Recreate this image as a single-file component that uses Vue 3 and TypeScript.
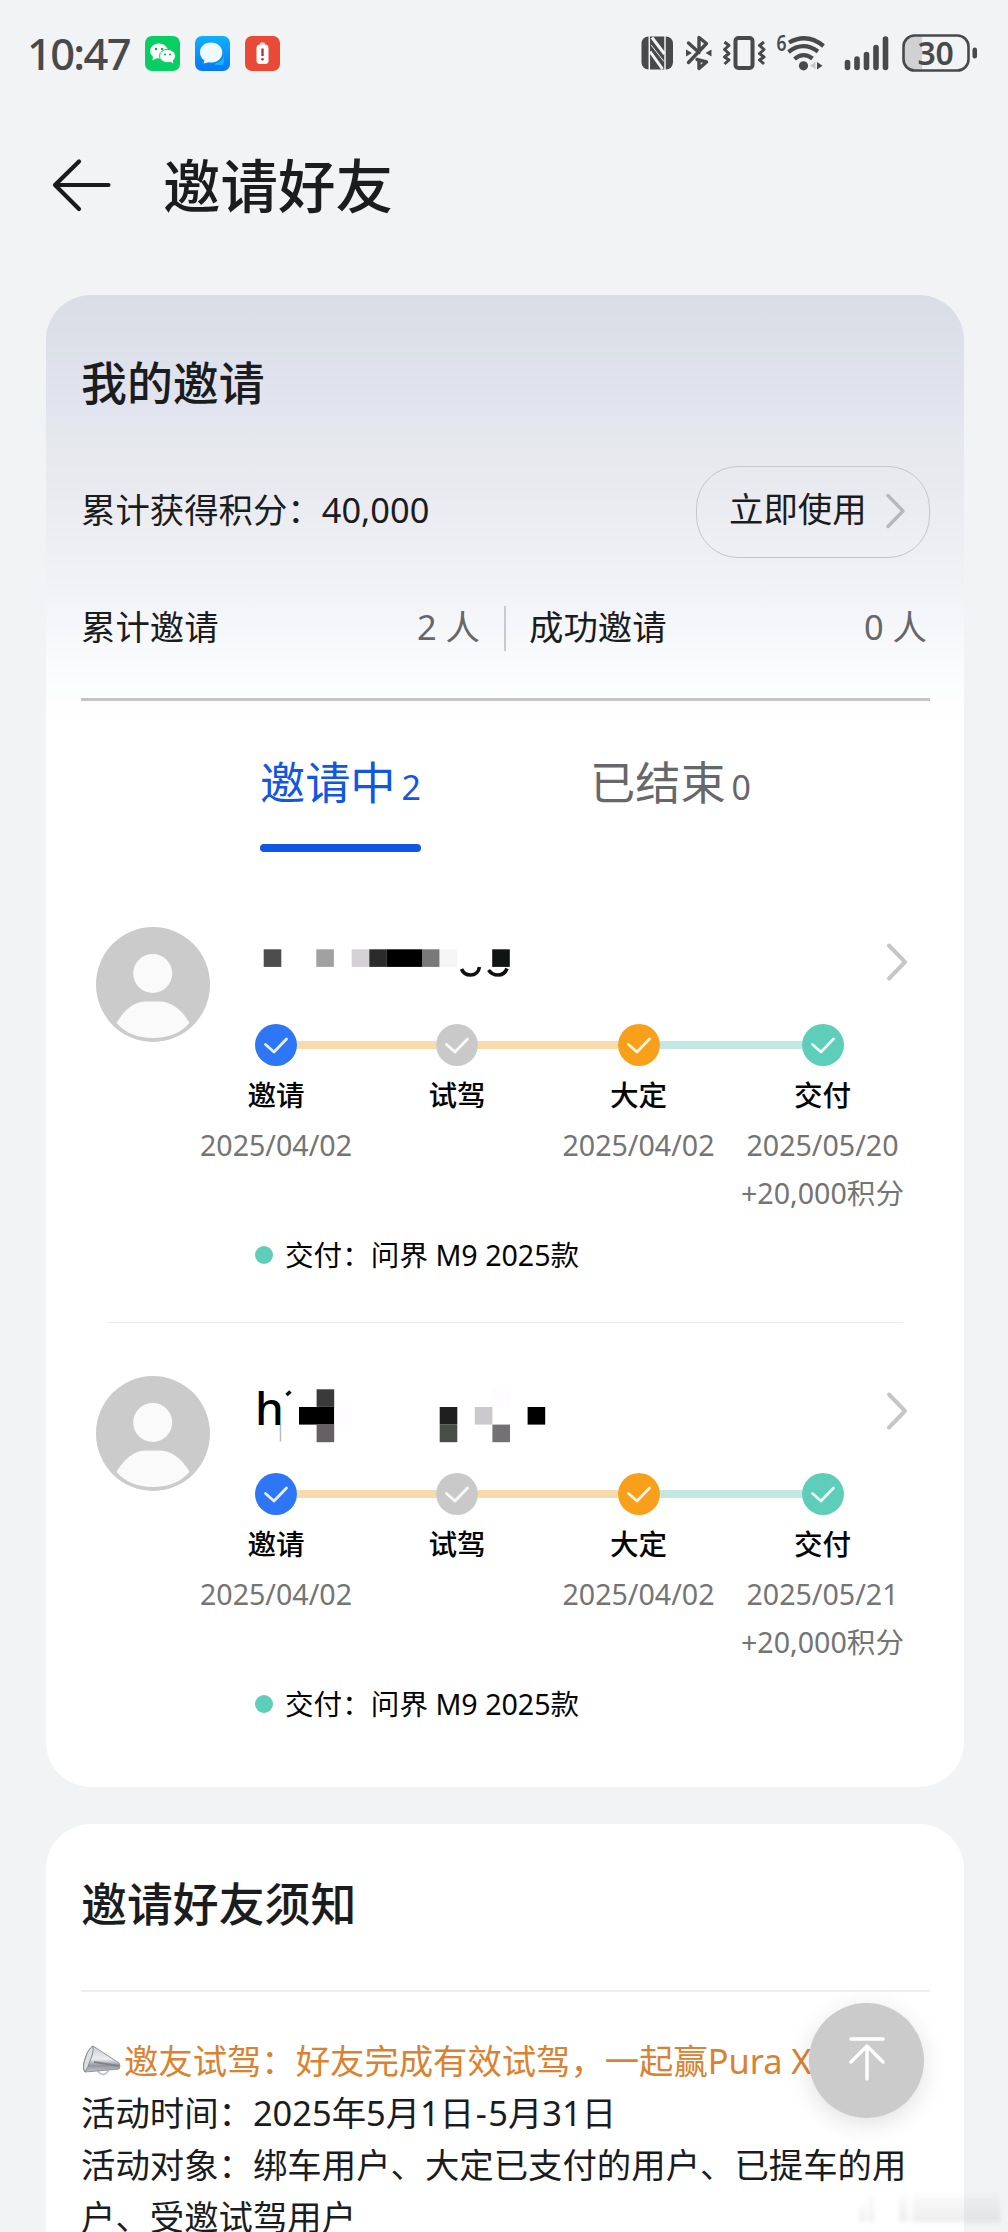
<script setup lang="ts">
interface Step {
  label: string
  tone: 'blue' | 'gray' | 'orange' | 'teal'
  date?: string
  points?: string
  link?: 'sand' | 'mint'
  linkWidth?: number
}

interface Block {
  x: number
  y: number
  w?: number
  c: string
}

interface Invite {
  prefix: string
  strokes: string
  hairline: string
  blocks: Block[]
  steps: Step[]
  model: string
}

const makeSteps = (delivered: string): Step[] => [
  { label: '邀请', tone: 'blue', date: '2025/04/02', link: 'sand', linkWidth: 139 },
  { label: '试驾', tone: 'gray', link: 'sand', linkWidth: 139.5 },
  { label: '大定', tone: 'orange', date: '2025/04/02', link: 'mint', linkWidth: 142 },
  { label: '交付', tone: 'teal', date: delivered, points: '+20,000积分' },
]

const invites: Invite[] = [
  {
    prefix: '',
    strokes: 'M206.500 42Q209 48 215.500 48Q223 48 224.500 40M233.500 43Q237 48 243 48Q249.500 48 252 41.500',
    hairline: '',
    blocks: [
      { x: 8.7, y: 22.3, c: '#4d4d4d' },
      { x: 61.3, y: 22.3, c: '#a1a1a1' },
      { x: 96.7, y: 22.3, c: '#d3d1d3' },
      { x: 114.3, y: 22.3, c: '#2b2b2b' },
      { x: 132, y: 22.3, w: 35.3, c: '#000' },
      { x: 167, y: 22.3, c: '#797979' },
      { x: 184.7, y: 22.3, c: '#f6f6f6' },
      { x: 237.2, y: 22.3, c: '#101413' },
    ],
    steps: makeSteps('2025/05/20'),
    model: '问界 M9 2025款',
  },
  {
    prefix: 'h',
    strokes: 'M31.500 19L35.500 15.500',
    hairline: 'M25.500 49V65.500',
    blocks: [
      { x: 61.6, y: 13.3, c: '#3a3a3a' },
      { x: 44, y: 31, w: 35.3, c: '#000' },
      { x: 61.6, y: 48.6, c: '#665f64' },
      { x: 79.2, y: 31, c: '#fefcfe' },
      { x: 184.7, y: 31, c: '#1f1f1f' },
      { x: 184.7, y: 48.6, c: '#4b4d4b' },
      { x: 219.8, y: 31, c: '#cbc9cc' },
      { x: 237.4, y: 13.3, c: '#fefcfe' },
      { x: 237.4, y: 48.6, c: '#737174' },
      { x: 272.6, y: 31, c: '#000' },
    ],
    steps: makeSteps('2025/05/21'),
    model: '问界 M9 2025款',
  },
]
</script>

<template>
  <div class="page">
    <div class="status">
      <span class="clock">10:47</span>
      <svg class="apps" width="135" height="36" viewBox="0 0 135 36">
        <defs>
          <linearGradient id="msg" x1="0" y1="0" x2="0" y2="1">
            <stop offset="0" stop-color="#0fb0fb" /><stop offset="1" stop-color="#0878f5" />
          </linearGradient>
        </defs>
        <rect width="35" height="35" rx="7" fill="#08cf63" />
        <ellipse cx="14" cy="15" rx="9" ry="7.500" fill="#fff" />
        <path d="M8 20L7.500 24.500L13 21.500Z" fill="#fff" />
        <ellipse cx="22.500" cy="20" rx="8" ry="6.600" fill="#fff" stroke="#08cf63" stroke-width="1" />
        <path d="M25 25L28 27.500L28 23Z" fill="#fff" />
        <g fill="#08a852">
          <circle cx="11" cy="13" r="1.200" /><circle cx="17" cy="13" r="1.200" />
          <circle cx="20" cy="18.500" r="1" /><circle cx="25" cy="18.500" r="1" />
        </g>
        <rect x="50" width="35" height="35" rx="7" fill="url(#msg)" />
        <path d="M71 27Q78 26 79 18V26Q79 29 76 29H70Z" fill="#17b4f8" />
        <path d="M66 6.500C59 6.500 55 11 55 16.500C55 20 57 23 59.500 24.500L58.500 27.500L64 26.300C72 27.500 77.300 22.500 77.300 16.500C77.300 11 73 6.500 66 6.500Z" fill="#effaff" />
        <rect x="100" width="35" height="35" rx="7" fill="#e84a35" />
        <rect x="115" y="6.500" width="5" height="3" rx="1" fill="#fbd9d3" />
        <rect x="111.500" y="8.500" width="12" height="19.500" rx="3.500" fill="#fff" />
        <path d="M117.500 12.500V20" stroke="#b8342a" stroke-width="2.400" />
        <circle cx="117.500" cy="23.300" r="1.300" fill="#b8342a" />
      </svg>
      <svg class="signals" width="345" height="46" viewBox="640 30 345 46">
        <rect x="641.500" y="36.500" width="31.500" height="33" rx="7" fill="#48494b" />
        <g fill="none" stroke="#f1f3f5">
          <path d="M649.300 36V70M665 36V70" stroke-width="1.500" />
          <path d="M652 37.500L664.500 54M650 51.500L662.500 69" stroke-width="3" />
          <path d="M651 45L664 61.500" stroke-width="1" />
        </g>
        <g fill="none" stroke="#48494b" stroke-width="3.400" stroke-linecap="round" stroke-linejoin="round">
          <path d="M688.500 43L699 52.500V37.500L706.500 43.500L688.500 62.500M697 59.500L706.500 62L699 68.500V60" />
        </g>
        <path d="M686 49.500L692 53L686 56.500ZM711.500 49.500L705.500 53L711.500 56.500Z" fill="#48494b" />
        <rect x="735.500" y="38" width="17" height="30" rx="3" fill="none" stroke="#48494b" stroke-width="4" />
        <g fill="none" stroke="#48494b" stroke-width="3" stroke-linejoin="round">
          <path d="M724.500 42L729 45.500L724.500 49.500L729 53.500L724.500 57L729 60L724.500 64" />
          <path d="M764 42L759.500 45.500L764 49.500L759.500 53.500L764 57L759.500 60L764 64" />
        </g>
        <text x="776.500" y="50.500" class="wifi-gen" textLength="10" lengthAdjust="spacingAndGlyphs">6</text>
        <g fill="none" stroke="#48494b" stroke-width="4.200">
          <path d="M789 42.500Q807 32.500 823.500 46" />
          <path d="M788.500 52Q803 40.500 818 51.500" />
          <path d="M794.500 59Q803.500 51.500 812.500 58.500" />
        </g>
        <circle cx="803.500" cy="65.800" r="4.600" fill="#48494b" />
        <path d="M815.500 62V69L810 65.500Z" fill="#c5c6c8" />
        <path d="M817 62V69.500L822.500 65.800Z" fill="#48494b" />
        <g stroke="#48494b" stroke-width="5.600" stroke-linecap="round">
          <path d="M847.500 62.500V67.500M857 59V67.500M866.500 54.500V67.500M876 47.500V67.500M885.500 39V67.500" />
        </g>
        <path d="M913 36.500H922V69.500H913A10 10 0 0 1 904 60V46A10 10 0 0 1 913 36.500Z" fill="#d0d1d3" />
        <rect x="903.500" y="35.500" width="65" height="35" rx="11" fill="none" stroke="#48494b" stroke-width="2.600" />
        <rect x="972.500" y="47.500" width="4.500" height="11" rx="2.200" fill="#48494b" />
        <text x="917.500" y="65" class="battery">30</text>
      </svg>
    </div>

    <header class="head">
      <svg width="60" height="56" viewBox="0 0 60 56">
        <path d="M56.500 27H3M27 3.500L3 27L27 51" fill="none" stroke="#1b1b1d" stroke-width="4.200" stroke-linecap="round" stroke-linejoin="round" />
      </svg>
      <h1>邀请好友</h1>
    </header>

    <section class="card mine">
      <h2>我的邀请</h2>
      <div class="points-row">
        <span>累计获得积分：40,000</span>
        <button class="use">
          <span>立即使用</span>
          <svg width="20" height="36" viewBox="0 0 20 36">
            <path d="M2 2.500L17 18L2 33.500" fill="none" stroke="#b7b8bc" stroke-width="3.400" stroke-linecap="round" stroke-linejoin="round" />
          </svg>
        </button>
      </div>
      <div class="counts">
        <div class="count"><span>累计邀请</span><span class="num">2 人</span></div>
        <i class="bar"></i>
        <div class="count"><span>成功邀请</span><span class="num">0 人</span></div>
      </div>
      <nav class="tabs">
        <div class="tab on"><span>邀请中</span><small>2</small></div>
        <div class="tab"><span>已结束</span><small>0</small></div>
      </nav>

      <article v-for="(item, i) in invites" :key="i" class="item">
        <svg class="avatar" width="114" height="115" viewBox="0 0 114 115">
          <ellipse cx="57" cy="57.500" rx="57" ry="57.500" fill="#cbcbcb" />
          <circle cx="56.700" cy="46.500" r="19.500" fill="#fafafa" />
          <path d="M20.500 96C26 86 37 74.500 49 74.500H64C77 74.500 88 86 93.500 96C85 106 72 111 57 111C42 111 29 106 20.500 96Z" fill="#fafafa" />
        </svg>
        <div class="body">
          <div class="name-row">
            <svg width="310" height="84" viewBox="0 0 310 84">
              <text v-if="item.prefix" x="0" y="48.500" class="name">{{ item.prefix }}</text>
              <rect v-for="(b, k) in item.blocks" :key="k" :x="b.x" :y="b.y" :width="b.w ?? 17.6" height="17.6" :fill="b.c" />
              <path :d="item.strokes" fill="none" stroke="#111" stroke-width="3.600" />
              <path v-if="item.hairline" :d="item.hairline" stroke="#bbb" stroke-width="1.500" />
            </svg>
            <svg class="chev" width="22" height="40" viewBox="0 0 22 40">
              <path d="M3 3.500L19 20L3 36.500" fill="none" stroke="#c6c6c6" stroke-width="4" stroke-linecap="round" stroke-linejoin="round" />
            </svg>
          </div>
          <div class="steps">
            <template v-for="s in item.steps" :key="s.label">
              <div class="step">
                <svg width="42" height="42" viewBox="0 0 42 42" :class="s.tone">
                  <circle cx="21" cy="21" r="21" />
                  <path d="M10.500 20.500L19 28L31.500 15" fill="none" stroke="#fff" stroke-opacity=".88" stroke-width="2.800" stroke-linecap="round" stroke-linejoin="round" />
                </svg>
                <b>{{ s.label }}</b>
                <span class="date">{{ s.date }}</span>
                <span v-if="s.points" class="gain">{{ s.points }}</span>
              </div>
              <i v-if="s.link" class="link" :class="s.link" :style="{ width: s.linkWidth + 'px' }"></i>
            </template>
          </div>
          <p class="result"><i></i>交付：{{ item.model }}</p>
        </div>
      </article>
    </section>

    <section class="card notice">
      <h2>邀请好友须知</h2>
      <div class="text">
        <p class="promo">
          <svg width="43" height="34" viewBox="0 0 43 34">
            <defs>
              <linearGradient id="horn" x1="0" y1="0" x2="0" y2="1">
                <stop offset="0" stop-color="#c9ccd2" /><stop offset=".5" stop-color="#eceef0" /><stop offset=".75" stop-color="#92969e" /><stop offset="1" stop-color="#c5c7cc" />
              </linearGradient>
            </defs>
            <path d="M16 25Q19 32 24 30Q28 28 27 24" fill="none" stroke="#b9bcc3" stroke-width="1.600" />
            <path d="M12 2L38 19Q40 22 38 25L4 28Q1 24 4 15Q7 5 12 2Z" fill="url(#horn)" stroke="#8f939c" stroke-width="1" />
            <path d="M12 2Q13 8 9 17Q7 24 4 28Q1 24 4 15Q7 5 12 2Z" fill="#dcdee2" stroke="#858993" stroke-width="1" />
            <path d="M13 18L38 22" stroke="#7f838c" stroke-width="2" />
          </svg>邀友试驾：好友完成有效试驾，一起赢Pura X
        </p>
        <p>活动时间：2025年5月1日<span class="dash">-</span>5月31日</p>
        <p>活动对象：绑车用户、大定已支付的用户、已提车的用户、受邀试驾用户</p>
      </div>
    </section>

    <button class="top">
      <svg width="40" height="48" viewBox="0 0 40 48">
        <path d="M4 4H36M20 44V11M4 27L20 11L36 27" fill="none" stroke="#fff" stroke-width="3.400" stroke-linecap="round" stroke-linejoin="round" />
      </svg>
    </button>

    <div class="mark"><i></i><i></i><i></i><i></i></div>
  </div>
</template>

<style>
body {
  margin: 0;
  background: #f1f3f5;
}
</style>

<style scoped>
.page {
  position: relative;
  width: 1008px;
  height: 2232px;
  overflow: hidden;
  background: #f1f3f5;
  color: #1b1c1e;
  font-family: 'Noto Sans', 'Noto Sans CJK SC', sans-serif;
  font-size: 34.4px;
}
h1, h2, p { margin: 0; }
svg { display: block; flex: none; }
button {
  font: inherit;
  color: inherit;
  padding: 0;
}
.status {
  display: flex;
  align-items: flex-start;
  height: 111px;
  box-sizing: border-box;
  padding: 30px 23px 0 27px;
}
.clock {
  width: 118px;
  font-size: 43.5px;
  line-height: 47px;
  font-weight: 500;
  letter-spacing: -1.7px;
  color: #48494b;
}
.apps { margin-top: 6px; }
.signals { margin-left: auto; }
.wifi-gen {
  font-size: 21px;
  font-weight: 600;
  fill: #48494b;
}
.battery {
  font-size: 32px;
  font-weight: 600;
  letter-spacing: -0.4px;
  fill: #48494b;
}
.head {
  display: flex;
  align-items: center;
  gap: 51px;
  height: 184px;
  box-sizing: border-box;
  padding: 0 0 34px 52px;
}
h1 {
  font-size: 57.5px;
  font-weight: 500;
  line-height: 70px;
}
.card {
  width: 918px;
  box-sizing: border-box;
  margin-left: 46px;
  padding: 0 34px 0 35px;
  border-radius: 45px;
  background: #fff;
}
.mine {
  height: 1492px;
  background: linear-gradient(#d9dde6 0, #e2e5ef 118px, #e4e7ec 132px, #eaebf0 200px, #f1f2f6 290px, #fafbfc 370px, #fff 425px);
}
.card h2 {
  font-size: 45.9px;
  font-weight: 500;
}
.mine h2 {
  height: 171px;
  line-height: 174px;
}
.points-row {
  display: flex;
  justify-content: space-between;
  align-items: center;
  height: 92px;
}
.points-row > span { padding-bottom: 8px; }
.use {
  display: flex;
  align-items: center;
  gap: 19px;
  width: 234px;
  height: 92px;
  box-sizing: border-box;
  padding: 0 0 2px 32px;
  border: 1.5px solid #c5c6ca;
  border-radius: 42px;
  background: transparent;
  line-height: 50px;
}
.use span { padding-bottom: 4px; }
.counts {
  display: flex;
  align-items: center;
  height: 143px;
  box-sizing: border-box;
  border-bottom: 3px solid #c4c4c5;
}
.count {
  display: flex;
  justify-content: space-between;
  width: 398px;
  padding-bottom: 6px;
}
.count:first-child { width: 399px; }
.bar {
  width: 2px;
  height: 45px;
  margin: 0 23px 0 24px;
  background: #c9cacd;
}
.num { color: #66676a; }
.tabs {
  display: flex;
  height: 173px;
  padding-left: 179px;
  gap: 169px;
}
.tab {
  position: relative;
  display: flex;
  align-items: baseline;
  gap: 6px;
  height: 151px;
  box-sizing: border-box;
  padding-top: 50px;
  font-size: 45.2px;
  line-height: 64px;
  color: #66676a;
}
.tab small { font-size: 34px; }
.tab.on { color: #1256e4; }
.tab.on::after {
  content: '';
  position: absolute;
  left: 0;
  right: 0;
  bottom: 0;
  height: 8px;
  border-radius: 4px;
  background: #1256e4;
}
.item {
  position: relative;
  display: flex;
  gap: 45px;
  height: 449px;
  box-sizing: border-box;
  padding: 53px 0 0 15px;
}
.item + .item::before {
  content: '';
  position: absolute;
  top: -1px;
  left: 26px;
  right: 27px;
  height: 1px;
  background: #ededee;
}
.body { color: #050505; }
.name-row {
  display: flex;
  height: 97px;
}
.name {
  font-size: 46px;
  font-weight: 500;
}
.chev {
  margin: 15px 0 0 321px;
}
.steps {
  display: flex;
  align-items: flex-start;
  height: 206px;
}
.step {
  display: flex;
  flex: none;
  flex-direction: column;
  align-items: center;
  width: 42px;
  font-size: 28.6px;
  white-space: nowrap;
}
.step b {
  height: 50px;
  margin-top: 4px;
  font-weight: 500;
  line-height: 50px;
}
.date {
  height: 49px;
  line-height: 49px;
  color: #747474;
}
.gain {
  line-height: 48px;
  color: #747474;
}
.blue { fill: #2e76f6; }
.gray { fill: #c9c9c9; }
.orange { fill: #f9a01b; }
.teal { fill: #5ecdb9; }
.link {
  flex: none;
  height: 8px;
  margin-top: 17px;
}
.sand { background: #f7dbab; }
.mint { background: #c1e9e1; }
.result {
  display: flex;
  align-items: center;
  font-size: 28.6px;
  line-height: 50px;
  white-space: pre;
}
.result i {
  width: 18px;
  height: 18px;
  margin-right: 12px;
  border-radius: 50%;
  background: #5ecdb9;
}
.notice {
  height: 500px;
  margin-top: 37px;
}
.notice h2 {
  height: 168px;
  box-sizing: border-box;
  line-height: 159px;
  border-bottom: 2px solid #efefef;
}
.text {
  padding-top: 43px;
  line-height: 52px;
}
.promo {
  display: flex;
  align-items: center;
  color: #db8230;
  letter-spacing: -0.05px;
  white-space: nowrap;
}
.dash { margin: 0 1.5px; }
.top {
  position: absolute;
  left: 809px;
  top: 2003px;
  display: flex;
  justify-content: center;
  align-items: center;
  width: 115px;
  height: 115px;
  padding-bottom: 3px;
  box-sizing: border-box;
  border: 0;
  border-radius: 50%;
  background: #cbcbcb;
  box-shadow: 0 6px 24px rgba(0, 0, 0, 0.12);
}
.mark {
  position: absolute;
  left: 853px;
  top: 2192px;
  display: flex;
  align-items: flex-end;
  width: 147px;
  height: 30px;
  filter: blur(2px);
}
.mark i {
  width: 88px;
  height: 28px;
  background: linear-gradient(rgba(120, 120, 120, 0.02), rgba(120, 120, 120, 0.13));
}
.mark i:first-child {
  width: 7px;
  height: 18px;
  margin: 0 3px 0 6px;
}
.mark i:nth-child(2) {
  width: 5px;
  height: 30px;
  margin-right: 25px;
}
.mark i:nth-child(3) {
  width: 9px;
  margin-right: 4px;
}
</style>
